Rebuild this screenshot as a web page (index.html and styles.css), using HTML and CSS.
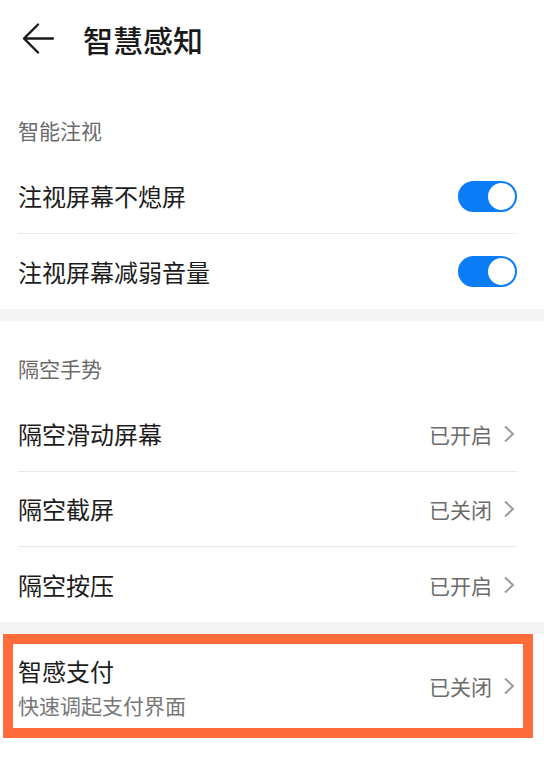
FILE: index.html
```html
<!DOCTYPE html>
<html lang="zh-CN">
<head>
<meta charset="utf-8">
<title>智慧感知</title>
<link rel="stylesheet" href="styles.css">
</head>
<body>
<div class="page">
  <header class="topbar">
    <svg class="back" width="32" height="32" viewBox="0 0 32 32" aria-hidden="true">
      <path d="M31 15.5 H2 M16 1.5 L2 15.5 L16 29.5" fill="none" stroke="#1a1a1a" stroke-width="2.4" stroke-linecap="round" stroke-linejoin="round"/>
    </svg>
    <h1 class="title">智慧感知</h1>
  </header>

  <section class="group">
    <div class="group-title">智能注视</div>
    <div class="row">
      <span class="label">注视屏幕不熄屏</span>
      <span class="toggle"><span class="knob"></span></span>
    </div>
    <div class="row">
      <span class="label">注视屏幕减弱音量</span>
      <span class="toggle"><span class="knob"></span></span>
    </div>
  </section>

  <section class="group">
    <div class="group-title">隔空手势</div>
    <div class="row">
      <span class="label">隔空滑动屏幕</span>
      <span class="value">已开启<svg class="chev" width="12" height="18" viewBox="0 0 12 18"><path d="M2 1.5 L10 9 L2 16.5" fill="none" stroke="#9a9a9a" stroke-width="2"/></svg></span>
    </div>
    <div class="row">
      <span class="label">隔空截屏</span>
      <span class="value">已关闭<svg class="chev" width="12" height="18" viewBox="0 0 12 18"><path d="M2 1.5 L10 9 L2 16.5" fill="none" stroke="#9a9a9a" stroke-width="2"/></svg></span>
    </div>
    <div class="row">
      <span class="label">隔空按压</span>
      <span class="value">已开启<svg class="chev" width="12" height="18" viewBox="0 0 12 18"><path d="M2 1.5 L10 9 L2 16.5" fill="none" stroke="#9a9a9a" stroke-width="2"/></svg></span>
    </div>
  </section>

  <section class="group group-last">
    <div class="row row-tall">
      <div class="text">
        <span class="label">智感支付</span>
        <span class="sub">快速调起支付界面</span>
      </div>
      <span class="value">已关闭<svg class="chev" width="12" height="18" viewBox="0 0 12 18"><path d="M2 1.5 L10 9 L2 16.5" fill="none" stroke="#9a9a9a" stroke-width="2"/></svg></span>
    </div>
    <div class="highlight"></div>
  </section>
</div>
</body>
</html>
```

FILE: styles.css
```css
* { box-sizing: border-box; margin: 0; padding: 0; }

html, body {
  width: 544px;
  height: 759px;
  overflow: hidden;
  background: #ffffff;
}

body {
  font-family: "Noto Sans CJK SC", "Noto Sans", sans-serif;
  color: #1a1a1a;
}

.page {
  display: flex;
  flex-direction: column;
  gap: 12px;
  min-height: 759px;
  background: #f4f4f4;
}

.topbar {
  height: 83px;
  margin-bottom: -12px;
  background: #ffffff;
  display: flex;
  align-items: center;
  padding: 0 0 6px 22px;
  gap: 29px;
}

.back { display: block; flex: none; }

.title {
  font-size: 30px;
  font-weight: 500;
  line-height: 36px;
  color: #1a1a1a;
}

.group {
  background: #ffffff;
  position: relative;
}

.group-title {
  height: 76px;
  padding: 35px 18px 0;
  font-size: 21px;
  line-height: 24px;
  color: #6b6b6b;
}

.row {
  height: 75px;
  margin: 0 27px 0 18px;
  display: flex;
  align-items: center;
  justify-content: space-between;
  border-bottom: 1px solid #e9e9e9;
}

.row:last-child { border-bottom: none; }

.label {
  font-size: 24px;
  line-height: 30px;
  color: #1c1c1c;
}

.value {
  display: flex;
  align-items: center;
  gap: 11px;
  font-size: 21px;
  line-height: 28px;
  color: #6b6b6b;
}

.chev { display: block; margin-right: 2px; }

.toggle {
  width: 59px;
  height: 31px;
  border-radius: 16px;
  background: #0a7cf6;
  display: flex;
  align-items: center;
  justify-content: flex-end;
  padding: 0 2px;
}

.knob {
  width: 27px;
  height: 27px;
  border-radius: 50%;
  background: #ffffff;
}

.group-last { flex: 1; }

.row-tall {
  height: 104px;
  border-bottom: none;
}

.text {
  display: flex;
  flex-direction: column;
  gap: 5px;
  padding-top: 2px;
}

.sub {
  font-size: 21px;
  line-height: 28px;
  color: #777777;
}

.highlight {
  position: absolute;
  left: 3px;
  top: 0;
  width: 530px;
  height: 104px;
  border: 10px solid #ff6b3b;
  pointer-events: none;
}
```
